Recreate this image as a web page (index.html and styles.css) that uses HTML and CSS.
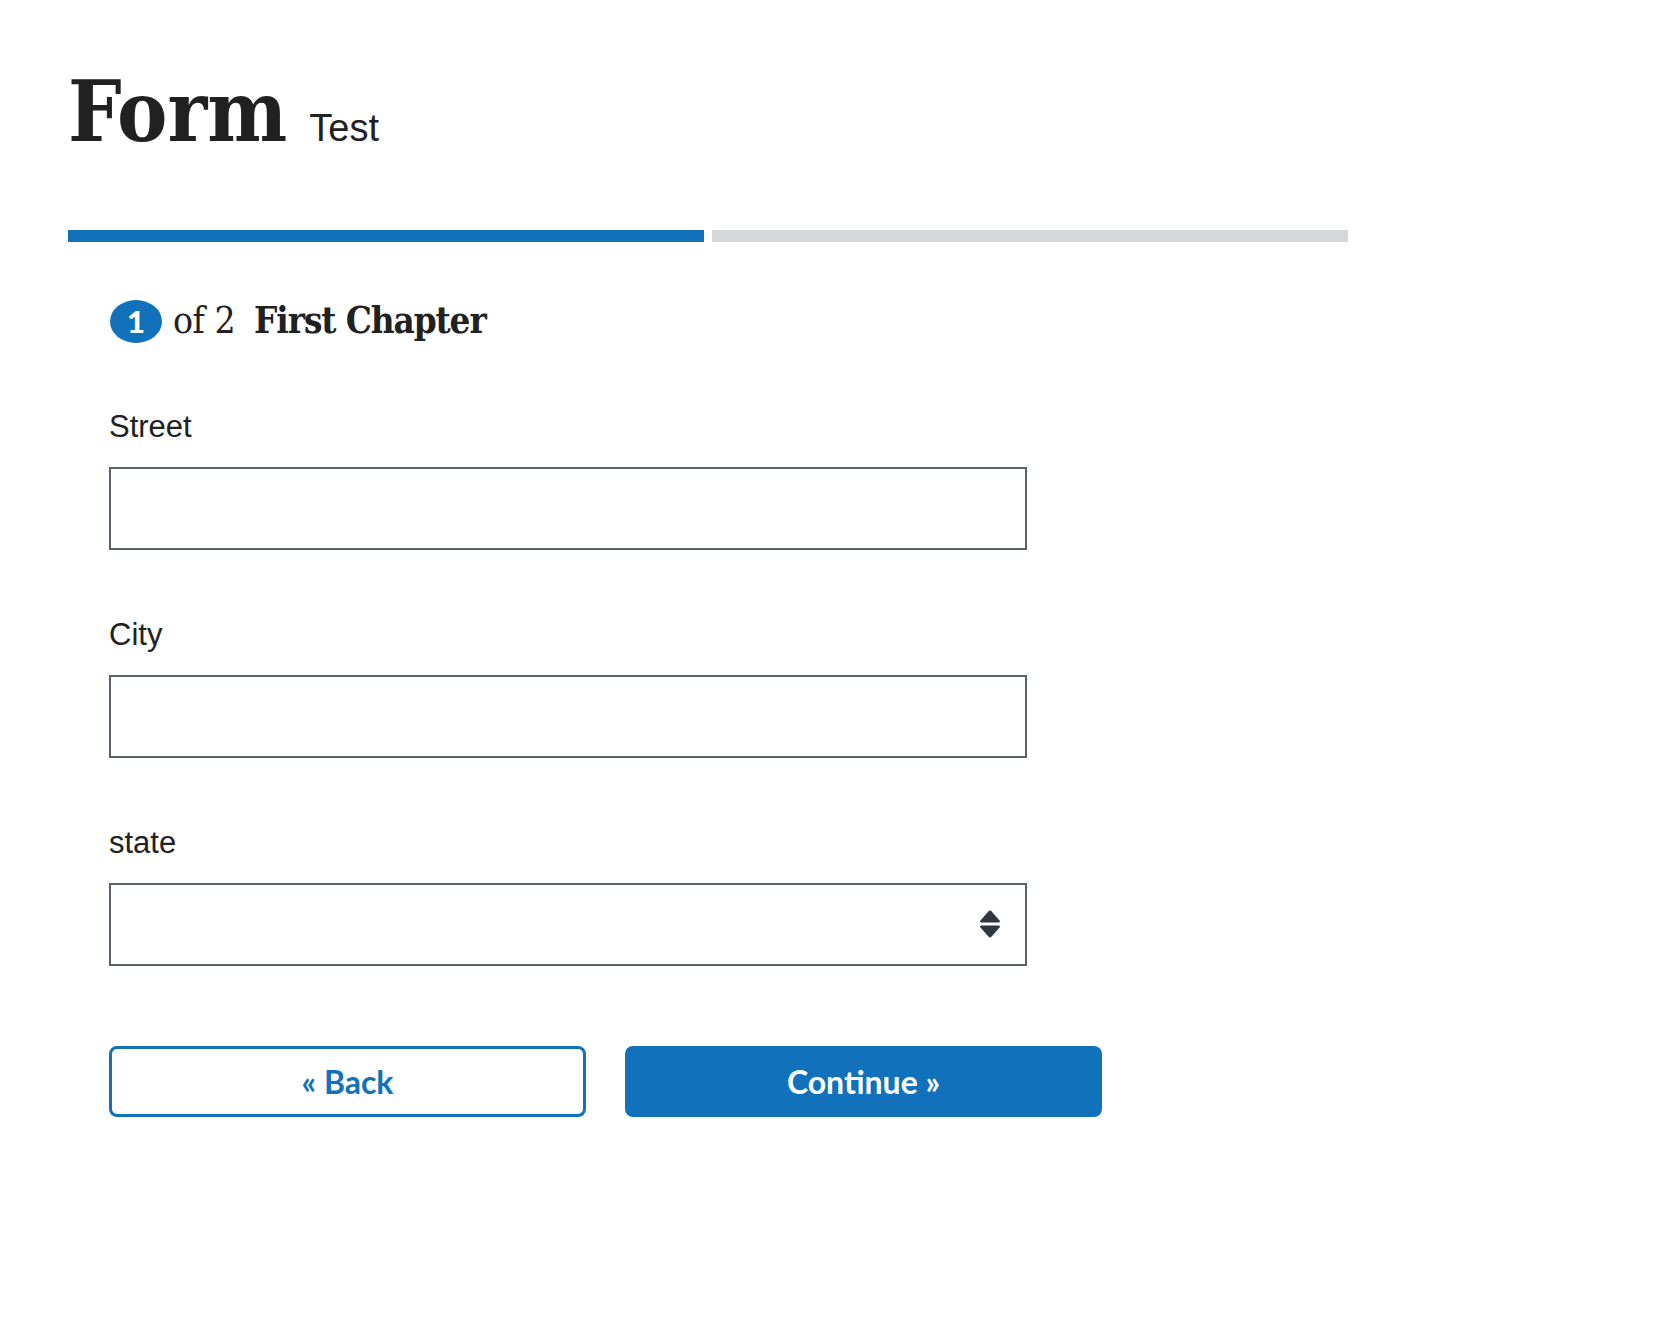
FILE: index.html
```html
<!DOCTYPE html>
<html lang="en">
<head>
<meta charset="utf-8">
<title>Form Test</title>
<link rel="stylesheet" href="styles.css">
</head>
<body>
<main class="page">
  <h1 class="title"><span class="title-main">Form</span><span class="title-sub">Test</span></h1>
  <div class="progress">
    <div class="progress-seg progress-seg--done"></div>
    <div class="progress-seg"></div>
  </div>
  <form class="form">
    <h2 class="step">
      <span class="step-num">1</span>
      <span class="step-of">of 2</span>
      <span class="step-name">First Chapter</span>
    </h2>
    <div class="field">
      <label class="field-label" for="street">Street</label>
      <input class="field-input" id="street" type="text">
    </div>
    <div class="field">
      <label class="field-label" for="city">City</label>
      <input class="field-input" id="city" type="text">
    </div>
    <div class="field">
      <label class="field-label" for="state">state</label>
      <div class="select-wrap">
        <select class="field-input field-select" id="state"><option></option></select>
        <svg class="select-arrow" width="20" height="28" viewBox="0 0 20 28" aria-hidden="true">
          <path d="M8.6 1.2 Q10 -0.2 11.4 1.2 L20 11 Q20 12.5 18.6 12.5 L1.4 12.5 Q0 12.5 0 11 Z" />
          <path d="M1.4 15.5 L18.6 15.5 Q20 15.5 20 17 L11.4 26.8 Q10 28.2 8.6 26.8 L0 17 Q0 15.5 1.4 15.5 Z" />
        </svg>
      </div>
    </div>
    <div class="actions">
      <button type="button" class="btn btn--outline">« Back</button>
      <button type="button" class="btn btn--primary">Continue »</button>
    </div>
  </form>
</main>
</body>
</html>
```
FILE: styles.css
```css
html, body {
  margin: 0;
  padding: 0;
  background: #ffffff;
  color: #212121;
}

.page {
  width: 1280px;
  padding-left: 68px;
}

.title {
  display: flex;
  align-items: baseline;
  gap: 22px;
  margin: 62px 0 0 0;
  height: 100px;
  line-height: 100px;
}

.title-main {
  font-family: "DejaVu Serif", serif;
  font-stretch: condensed;
  font-weight: bold;
  font-size: 84px;
  color: #212121;
  margin-left: 0;
}

.title-sub {
  font-family: "Liberation Sans", Arial, sans-serif;
  font-weight: normal;
  font-size: 38px;
  color: #212121;
}

.progress {
  display: flex;
  gap: 8px;
  margin-top: 68px;
}

.progress-seg {
  flex: 1;
  height: 12px;
  background: #d6d7d9;
}

.progress-seg--done {
  background: #1172bb;
}

.form {
  padding-left: 41px;
}

.step {
  display: flex;
  align-items: baseline;
  margin: 55px 0 0 0;
  height: 48px;
  line-height: 48px;
  font-family: "DejaVu Serif", serif;
  font-stretch: condensed;
  font-size: 37px;
  color: #212121;
}

.step-num {
  display: inline-block;
  width: 52px;
  height: 43px;
  line-height: 43px;
  border-radius: 50%;
  background: #1172bb;
  color: #ffffff;
  text-align: center;
  font-family: Lato, "Liberation Sans", sans-serif;
  font-weight: 900;
  font-size: 31px;
  margin-left: 1px;
}

.step-of {
  font-weight: normal;
  margin-left: 11px;
  letter-spacing: -0.5px;
}

.step-name {
  font-weight: bold;
  font-size: 36.5px;
  margin-left: 19px;
  letter-spacing: -1.1px;
}

.field {
  display: flex;
  flex-direction: column;
  align-items: flex-start;
  margin-bottom: 65px;
}

.step + .field {
  margin-top: 62px;
}

.field-label {
  display: block;
  font-family: "Liberation Sans", Arial, sans-serif;
  font-size: 31px;
  line-height: 40px;
  color: #212121;
  margin-bottom: 20px;
}

.field-input {
  display: block;
  box-sizing: border-box;
  width: 918px;
  height: 83px;
  margin: 0;
  padding: 0 20px;
  border: 2px solid #5b616b;
  border-radius: 0;
  background: #ffffff;
  font-family: "Liberation Sans", Arial, sans-serif;
  font-size: 28px;
  color: #212121;
  outline: none;
}

.select-wrap {
  position: relative;
  width: 918px;
}

.field-select {
  -webkit-appearance: none;
  appearance: none;
}

.select-arrow {
  position: absolute;
  right: 27px;
  top: 27px;
  fill: #2f3640;
  pointer-events: none;
}

.actions {
  display: flex;
  gap: 39px;
  margin-top: 80px;
}

.btn {
  box-sizing: border-box;
  width: 477px;
  height: 71px;
  border-radius: 8px;
  font-family: Lato, "Liberation Sans", sans-serif;
  font-weight: bold;
  font-size: 32px;
  display: flex;
  align-items: center;
  justify-content: center;
  padding: 0;
  margin: 0;
  cursor: pointer;
}

.btn--outline {
  background: #ffffff;
  color: #1172bb;
  border: 3.5px solid #1172bb;
}

.btn--primary {
  background: #1172bb;
  color: #ffffff;
  border: none;
}
```
